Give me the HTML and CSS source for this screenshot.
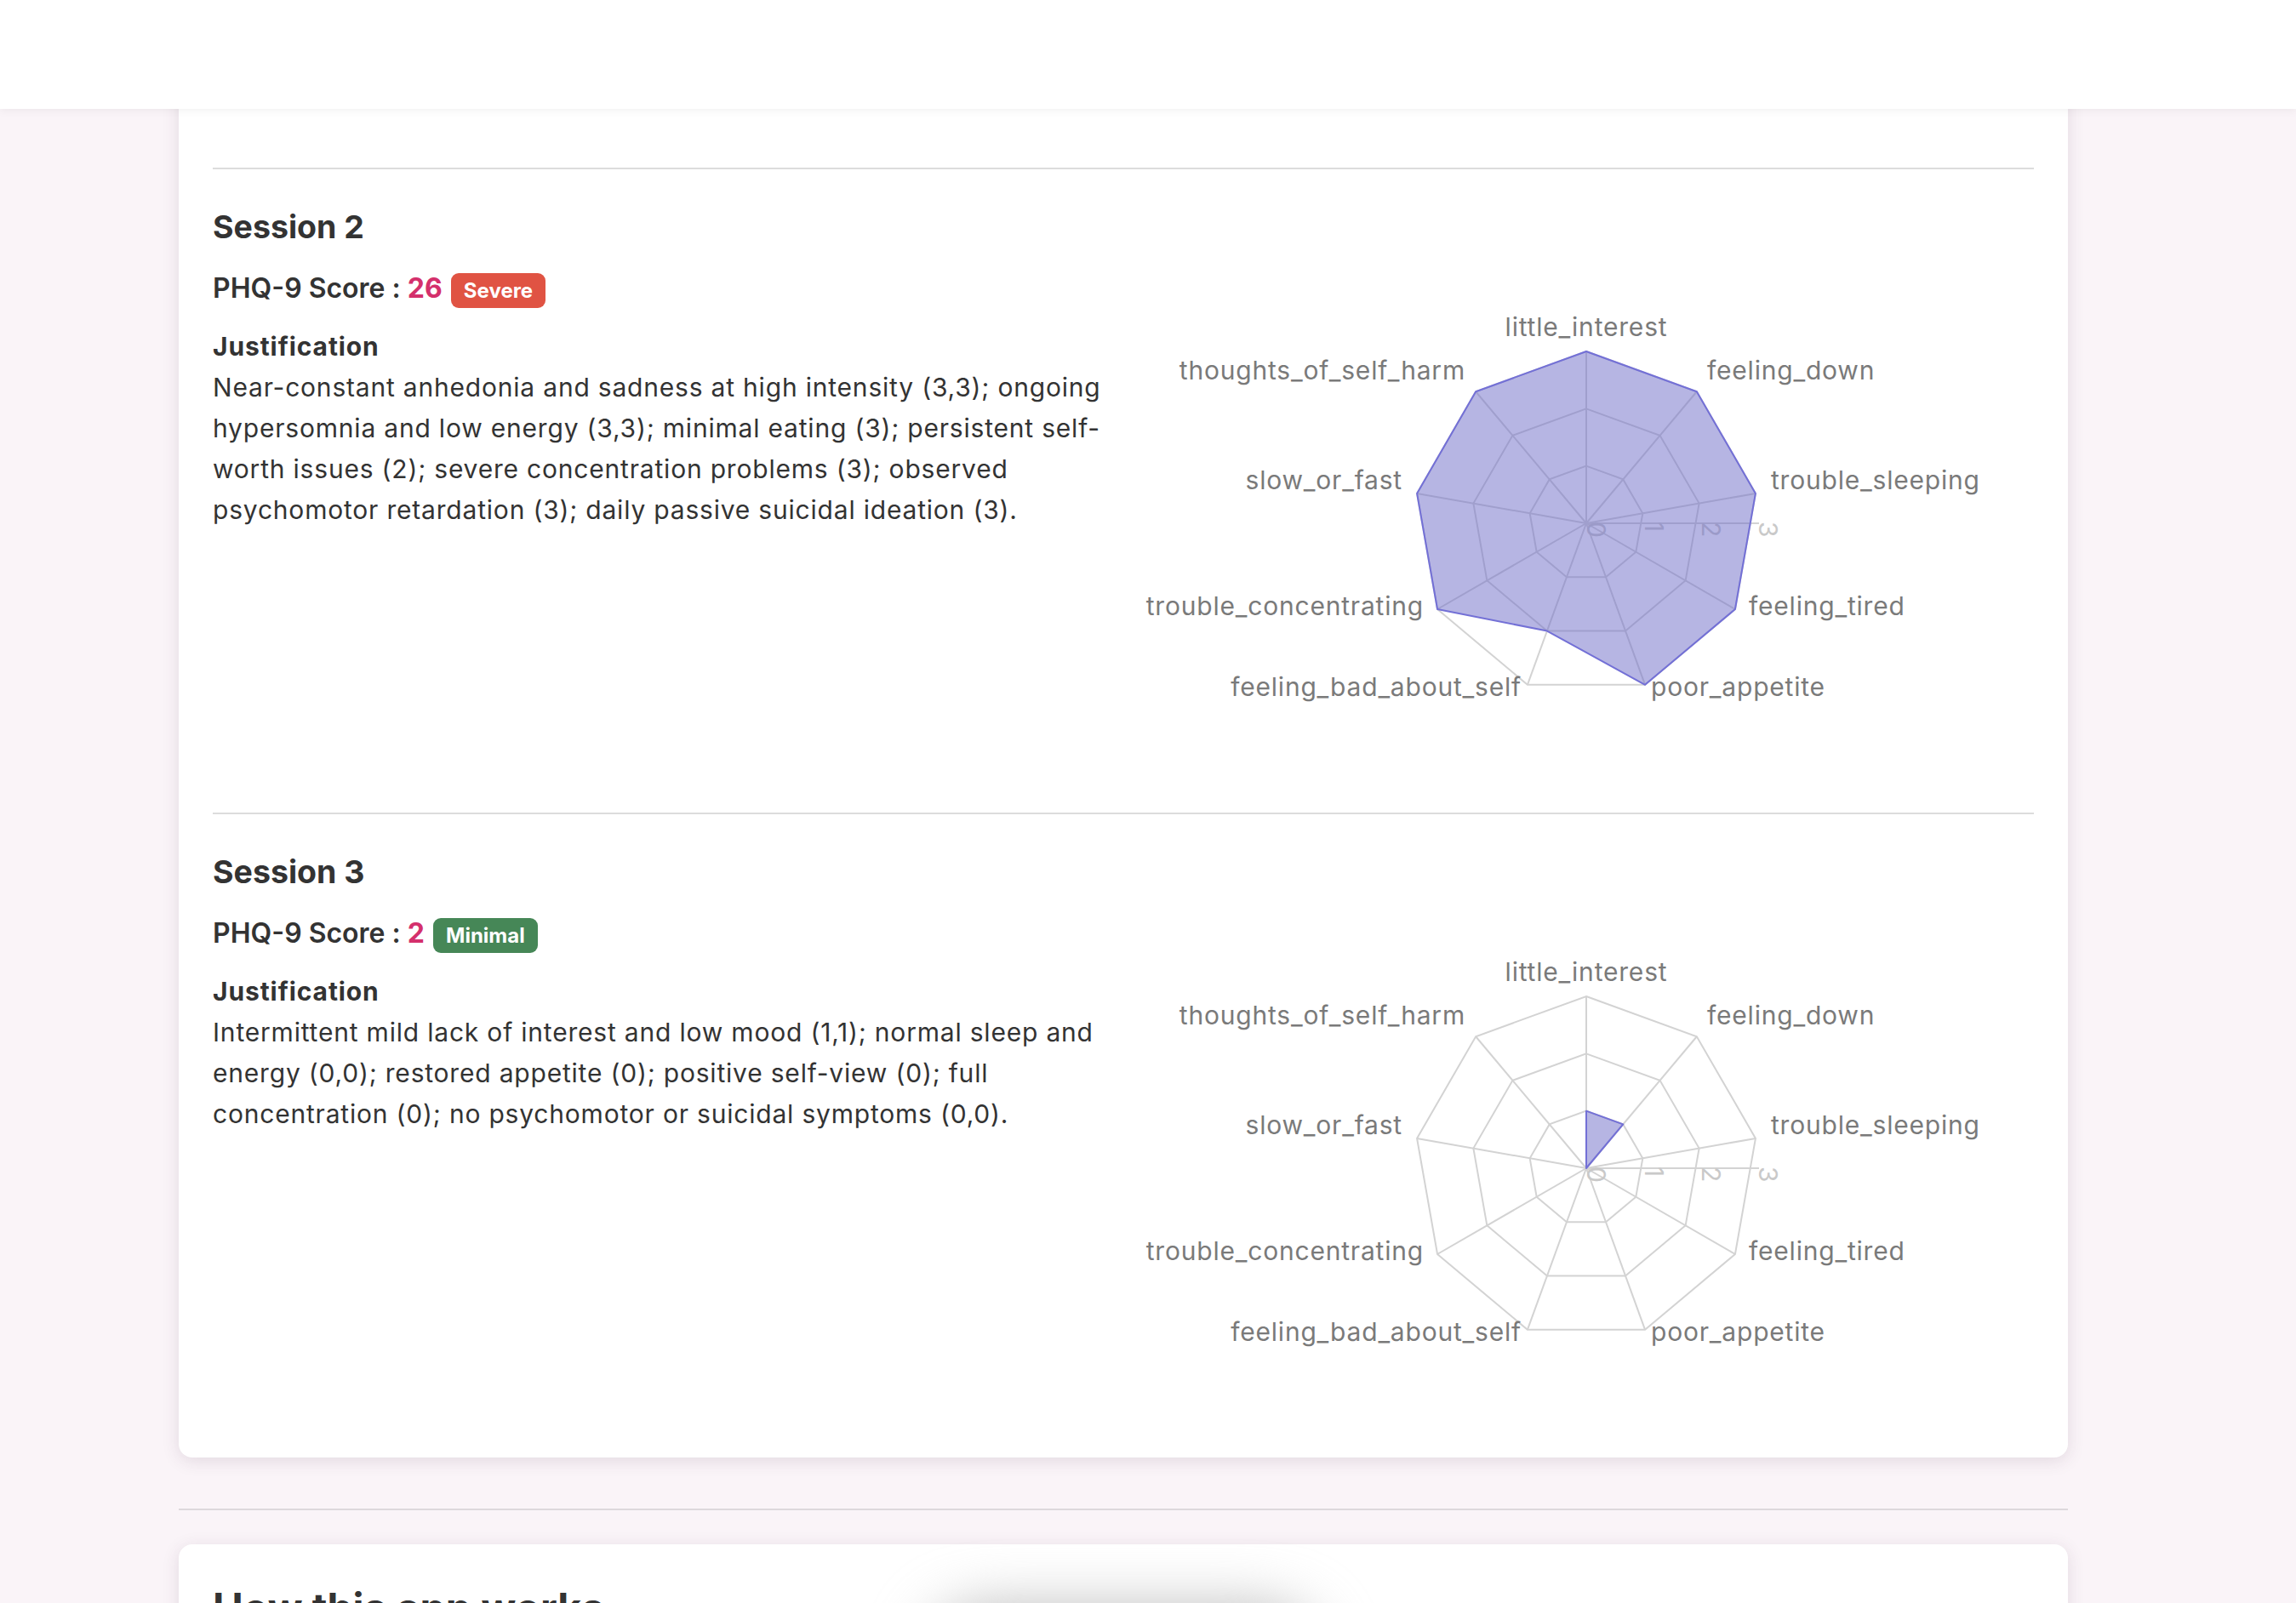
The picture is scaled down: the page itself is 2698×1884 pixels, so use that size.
FILE: index.html
```html
<!DOCTYPE html>
<html lang="en">
<head>
<meta charset="utf-8">
<title>PHQ-9 Sessions</title>
<link rel="stylesheet" href="styles.css">
</head>
<body>
<header class="topbar"></header>
<main class="page">
  <section class="card results">
    <div class="session">
      <div class="session-info">
        <h3 class="session-title">Session 2</h3>
        <div class="score-row"><span class="score-label">PHQ-9 Score :</span> <span class="score-value">26</span> <span class="badge badge-severe">Severe</span></div>
        <h4 class="just-title">Justification</h4>
        <p class="just-text">Near-constant anhedonia and sadness at high intensity (3,3); ongoing hypersomnia and low energy (3,3); minimal eating (3); persistent self-worth issues (2); severe concentration problems (3); observed psychomotor retardation (3); daily passive suicidal ideation (3).</p>
      </div>
      <div class="session-chart">
        <svg class="radar" width="1054" height="676" viewBox="0 0 1054 676">
          <g class="grid">
            <polygon points="528,308.67 571.28,324.42 594.31,364.31 586.31,409.67 551.03,439.27 504.97,439.27 469.69,409.67 461.69,364.31 484.72,324.42"/>
            <polygon points="528,241.33 614.56,272.84 660.62,352.61 644.63,443.33 574.06,502.55 481.94,502.55 411.37,443.33 395.38,352.61 441.44,272.84"/>
            <polygon points="528,174 657.84,221.26 726.93,340.92 702.94,477 597.09,565.82 458.91,565.82 353.06,477 329.07,340.92 398.16,221.26"/>
            <line x1="528" y1="376" x2="528" y2="174"/>
            <line x1="528" y1="376" x2="657.84" y2="221.26"/>
            <line x1="528" y1="376" x2="726.93" y2="340.92"/>
            <line x1="528" y1="376" x2="702.94" y2="477"/>
            <line x1="528" y1="376" x2="597.09" y2="565.82"/>
            <line x1="528" y1="376" x2="458.91" y2="565.82"/>
            <line x1="528" y1="376" x2="353.06" y2="477"/>
            <line x1="528" y1="376" x2="329.07" y2="340.92"/>
            <line x1="528" y1="376" x2="398.16" y2="221.26"/>
            <line x1="528" y1="376" x2="731" y2="376"/>
          </g>
          <g class="ticks">
            <text transform="translate(529 374) rotate(90)">0</text>
            <text transform="translate(596.5 374) rotate(90)">1</text>
            <text transform="translate(664 374) rotate(90)">2</text>
            <text transform="translate(731 374) rotate(90)">3</text>
          </g>
          <polygon class="area" points="528,174 657.84,221.26 726.93,340.92 702.94,477 597.09,565.82 481.94,502.55 353.06,477 329.07,340.92 398.16,221.26"/>
          <g class="labels">
            <text x="528" y="156" class="mid">little_interest</text>
            <text x="670" y="207">feeling_down</text>
            <text x="745" y="336">trouble_sleeping</text>
            <text x="719" y="484">feeling_tired</text>
            <text x="604" y="579">poor_appetite</text>
            <text x="452" y="579" class="end">feeling_bad_about_self</text>
            <text x="337" y="484" class="end">trouble_concentrating</text>
            <text x="312" y="336" class="end">slow_or_fast</text>
            <text x="386" y="207" class="end">thoughts_of_self_harm</text>
          </g>
        </svg>
      </div>
    </div>

    <div class="session">
      <div class="session-info">
        <h3 class="session-title">Session 3</h3>
        <div class="score-row"><span class="score-label">PHQ-9 Score :</span> <span class="score-value">2</span> <span class="badge badge-minimal">Minimal</span></div>
        <h4 class="just-title">Justification</h4>
        <p class="just-text">Intermittent mild lack of interest and low mood (1,1); normal sleep and energy (0,0); restored appetite (0); positive self-view (0); full concentration (0); no psychomotor or suicidal symptoms (0,0).</p>
      </div>
      <div class="session-chart">
        <svg class="radar" width="1054" height="676" viewBox="0 0 1054 676">
          <g class="grid">
            <polygon points="528,308.67 571.28,324.42 594.31,364.31 586.31,409.67 551.03,439.27 504.97,439.27 469.69,409.67 461.69,364.31 484.72,324.42"/>
            <polygon points="528,241.33 614.56,272.84 660.62,352.61 644.63,443.33 574.06,502.55 481.94,502.55 411.37,443.33 395.38,352.61 441.44,272.84"/>
            <polygon points="528,174 657.84,221.26 726.93,340.92 702.94,477 597.09,565.82 458.91,565.82 353.06,477 329.07,340.92 398.16,221.26"/>
            <line x1="528" y1="376" x2="528" y2="174"/>
            <line x1="528" y1="376" x2="657.84" y2="221.26"/>
            <line x1="528" y1="376" x2="726.93" y2="340.92"/>
            <line x1="528" y1="376" x2="702.94" y2="477"/>
            <line x1="528" y1="376" x2="597.09" y2="565.82"/>
            <line x1="528" y1="376" x2="458.91" y2="565.82"/>
            <line x1="528" y1="376" x2="353.06" y2="477"/>
            <line x1="528" y1="376" x2="329.07" y2="340.92"/>
            <line x1="528" y1="376" x2="398.16" y2="221.26"/>
            <line x1="528" y1="376" x2="731" y2="376"/>
          </g>
          <g class="ticks">
            <text transform="translate(529 374) rotate(90)">0</text>
            <text transform="translate(596.5 374) rotate(90)">1</text>
            <text transform="translate(664 374) rotate(90)">2</text>
            <text transform="translate(731 374) rotate(90)">3</text>
          </g>
          <polygon class="area" points="528,308.67 571.28,324.42 528,376"/>
          <g class="labels">
            <text x="528" y="156" class="mid">little_interest</text>
            <text x="670" y="207">feeling_down</text>
            <text x="745" y="336">trouble_sleeping</text>
            <text x="719" y="484">feeling_tired</text>
            <text x="604" y="579">poor_appetite</text>
            <text x="452" y="579" class="end">feeling_bad_about_self</text>
            <text x="337" y="484" class="end">trouble_concentrating</text>
            <text x="312" y="336" class="end">slow_or_fast</text>
            <text x="386" y="207" class="end">thoughts_of_self_harm</text>
          </g>
        </svg>
      </div>
    </div>
  </section>

  <hr class="divider">

  <section class="card how">
    <div class="blur-blob"></div>
    <h2 class="how-title">How this app works</h2>
  </section>
</main>
</body>
</html>
```

FILE: styles.css
```css
* {
  box-sizing: border-box;
}

html, body {
  margin: 0;
  padding: 0;
}

body {
  background: #faf4f8;
  font-family: Inter, "Noto Sans", "Liberation Sans", sans-serif;
  color: #333333;
}

.topbar {
  position: fixed;
  top: 0;
  left: 0;
  right: 0;
  height: 128px;
  background: #ffffff;
  box-shadow: 0 2px 10px rgba(0, 0, 0, 0.06);
  z-index: 10;
}

.page {
  width: 2220px;
  margin: 0 0 0 210px;
  padding-bottom: 400px;
}

.card {
  background: #ffffff;
  border-radius: 16px;
  box-shadow: 0 4px 20px rgba(70, 40, 70, 0.13);
}

.results {
  padding: 197px 40px 40px;
}

.session {
  border-top: 2px solid #dcdcdc;
  padding-top: 40px;
  display: grid;
  grid-template-columns: 1fr 1fr;
  column-gap: 32px;
}

.session + .session {
  margin-top: 40px;
}

.session-title {
  margin: 0 0 19px;
  font-size: 37.5px;
  line-height: 56px;
  font-weight: 700;
}

.score-row {
  font-size: 32px;
  line-height: 49.5px;
  font-weight: 600;
  margin: 0;
}

.score-value {
  color: #d4306c;
  font-weight: 700;
}

.badge {
  display: inline-block;
  margin-left: 2px;
  padding: 6px 15px;
  font-size: 24px;
  line-height: 29px;
  font-weight: 700;
  color: #ffffff;
  border-radius: 9px;
}

.badge-severe {
  background: #e05343;
}

.badge-minimal {
  background: #468757;
}

.just-title {
  margin: 19.5px 0 0;
  font-size: 30px;
  line-height: 48px;
  font-weight: 700;
  letter-spacing: 0.9px;
}

.just-text {
  margin: 0;
  font-size: 30px;
  line-height: 48px;
  font-weight: 400;
  letter-spacing: 0.8px;
}

.session-chart {
  height: 676px;
}

.radar {
  display: block;
}

.radar .grid polygon,
.radar .grid line {
  fill: none;
  stroke: #d3d3d3;
  stroke-width: 2;
}

.radar .ticks text {
  font-family: Inter, "Noto Sans", sans-serif;
  font-size: 30px;
  fill: #c9c9c9;
}

.radar .area {
  fill: rgba(110, 108, 200, 0.5);
  stroke: #7370d6;
  stroke-width: 2;
  stroke-linejoin: round;
}

.radar .labels text {
  font-family: Inter, "Noto Sans", sans-serif;
  font-size: 30px;
  letter-spacing: 0.8px;
  fill: #7a7a7a;
}

.radar .labels .mid {
  text-anchor: middle;
}

.radar .labels .end {
  text-anchor: end;
}

.divider {
  margin: 60px 0 40px;
  border: 0;
  height: 2px;
  background: #ddd8dc;
}

.how {
  position: relative;
  padding: 40px;
  min-height: 600px;
}

.how-title {
  margin: 6px 0 0;
  font-size: 48px;
  line-height: 58px;
  font-weight: 700;
}

.blur-blob {
  position: absolute;
  left: 50%;
  top: 75px;
  width: 460px;
  height: 220px;
  margin-left: -230px;
  border-radius: 70px;
  background: #b9b9b9;
  filter: blur(34px);
}
```
